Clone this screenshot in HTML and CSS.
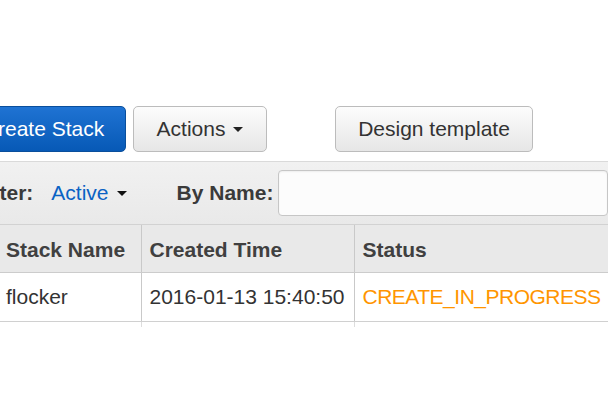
FILE: index.html
```html
<!DOCTYPE html>
<html>
<head>
<meta charset="utf-8">
<link rel="stylesheet" href="styles.css">
</head>
<body>
<div class="page">
  <div class="toolbar">
    <button class="btn btn-primary">Create Stack</button>
    <button class="btn btn-default btn-actions">Actions <span class="caret"></span></button>
    <button class="btn btn-default btn-design">Design template</button>
  </div>
  <div class="filterbar">
    <span class="label">Filter:</span>
    <span class="filter-value">Active <span class="caret"></span></span>
    <span class="label label-name">By Name:</span>
    <input class="search" type="text">
  </div>
  <table class="grid">
    <thead>
      <tr>
        <th class="col-name">Stack Name</th>
        <th class="col-time">Created Time</th>
        <th class="col-status">Status</th>
      </tr>
    </thead>
    <tbody>
      <tr>
        <td>flocker</td>
        <td>2016-01-13 15:40:50</td>
        <td class="status">CREATE_IN_PROGRESS</td>
      </tr>
      <tr class="stub">
        <td></td><td></td><td></td>
      </tr>
    </tbody>
  </table>
</div>
</body>
</html>
```
FILE: styles.css
```css
html, body {
  margin: 0;
  padding: 0;
  background: #ffffff;
  overflow: hidden;
}
body {
  font-family: "Liberation Sans", Arial, sans-serif;
  font-size: 21px;
  color: #333333;
}
.page {
  margin-left: -40px;
  width: 700px;
}
.toolbar {
  display: flex;
  align-items: center;
  padding-top: 106px;
  padding-left: 1px;
  height: 46px;
  gap: 7px;
}
.btn {
  height: 46px;
  border-radius: 5px;
  font-family: "Liberation Sans", Arial, sans-serif;
  font-size: 21px;
  display: flex;
  align-items: center;
  justify-content: center;
  padding: 0;
  box-sizing: border-box;
}
.btn-primary {
  width: 165px;
  color: #ffffff;
  background: linear-gradient(#1f73d3, #0759b6);
  border: 1px solid #0a4f9c;
}
.btn-default {
  color: #333333;
  background: linear-gradient(#fcfcfc, #e6e6e6);
  border: 1px solid #bcbcbc;
}
.btn-actions {
  width: 134px;
  gap: 8px;
}
.btn-design {
  width: 198px;
  margin-left: 61px;
}
.caret {
  display: inline-block;
  width: 0;
  height: 0;
  border-left: 5px solid transparent;
  border-right: 5px solid transparent;
  border-top: 5px solid #222222;
}
.filterbar {
  margin-top: 9px;
  height: 62px;
  display: flex;
  align-items: center;
  background: linear-gradient(#f1f1f1, #e9e9e9);
  border-top: 1px solid #dadada;
  border-bottom: 1px solid #d2d2d2;
  padding-left: 15px;
}
.label {
  font-weight: bold;
  color: #3a3a3a;
}
.filter-value {
  color: #0a62c4;
  margin-left: 18px;
  display: flex;
  align-items: center;
  gap: 8px;
}
.filter-value .caret {
  border-top-color: #111111;
  margin-top: 1px;
}
.label-name {
  margin-left: 50px;
}
.search {
  margin-left: 5px;
  width: 330px;
  height: 46px;
  box-sizing: border-box;
  border: 1px solid #c6c6c6;
  border-radius: 4px;
  background: #fcfcfc;
  box-shadow: inset 0 1px 2px rgba(0,0,0,0.06);
}
.grid {
  margin-left: 38px;
  border-collapse: collapse;
  width: 660px;
}
.grid th, .grid td {
  text-align: left;
  padding: 0 8px;
  border-right: 1px solid #c9c9c9;
}
.grid th {
  height: 47px;
  background: #e9e9e9;
  font-weight: bold;
  color: #404040;
  border-bottom: 1px solid #cccccc;
  padding-top: 3px;
  box-sizing: border-box;
}
.grid td {
  height: 48px;
  border-bottom: 1px solid #d0d0d0;
  color: #333333;
}
.col-name { width: 143px; }
.col-time { width: 213px; }
.grid .status {
  color: #ff9500;
  letter-spacing: -0.5px;
}
.grid .stub td {
  height: 5px;
  padding: 0;
  border-bottom: none;
  border-right: 1px solid #dddddd;
}
```
